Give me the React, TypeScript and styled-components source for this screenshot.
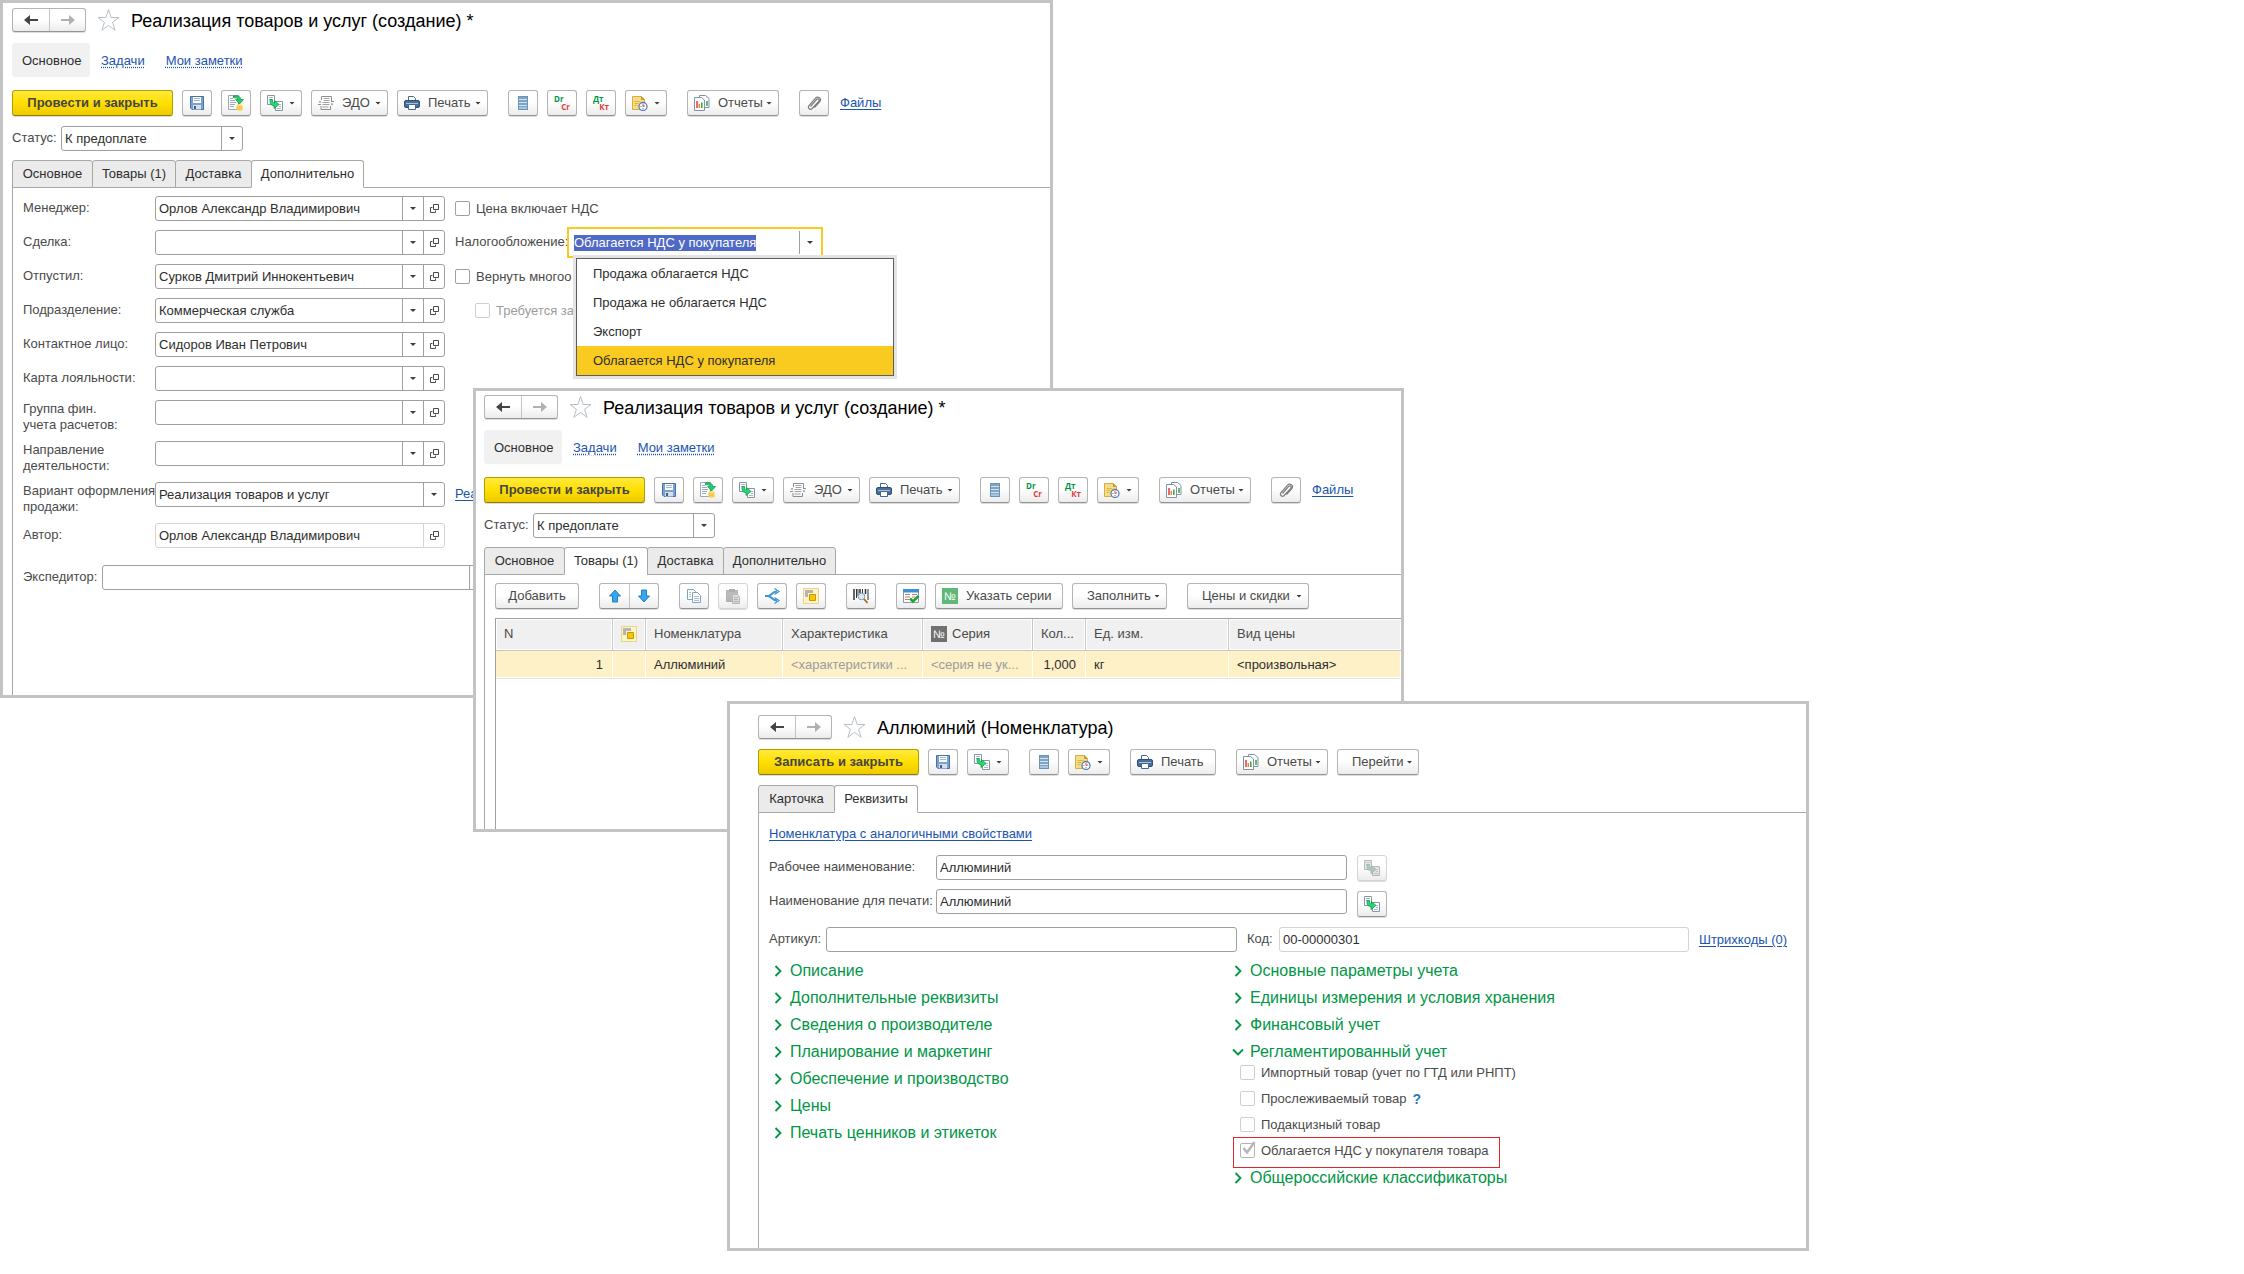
import React, { useEffect, useId, useRef } from "react";
import styled, { createGlobalStyle, css } from "styled-components";

const color = {
  frame: "#c3c3c3",
  line: "#a8a8a8",
  field: "#a0a0a0",
  muted: "#d4d4d4",
  text: "#2e2e2e",
  label: "#4a4a4a",
  faint: "#9c9c9c",
  link: "#1a54ad",
  green: "#009646",
  amber: "#f9cb20",
};

const GlobalStyle = createGlobalStyle`
  *, *::before, *::after { box-sizing: border-box; }
  body { margin: 0; background: #fff; }
  body, button, input, select, table {
    font-family: "Liberation Sans", Arial, sans-serif;
    font-size: 13px;
    line-height: 16px;
    color: ${color.text};
  }
`;

/* ---------- windows ---------- */

const Desktop = styled.main`
  position: relative;
  min-height: 100vh;
  overflow: hidden;
`;

const Window = styled.section<{ $x: number; $y: number; $w: number; $h: number; $pad: string }>`
  position: absolute;
  left: ${(p) => p.$x}px;
  top: ${(p) => p.$y}px;
  width: ${(p) => p.$w}px;
  height: ${(p) => p.$h}px;
  padding: ${(p) => p.$pad};
  display: flex;
  flex-direction: column;
  overflow: hidden;
  white-space: nowrap;
  background: #fff;
  border: 3px solid ${color.frame};
`;

const TitleBar = styled.header`
  display: flex;
  align-items: center;
  height: 24px;
`;

const Title = styled.h1`
  margin: 0 0 0 11px;
  padding-top: 2px;
  font-size: 18px;
  line-height: 24px;
  font-weight: 400;
  color: #000;
`;

const StarButton = styled.button`
  margin-left: 11px;
  padding: 0;
  width: 23px;
  height: 24px;
  border: 0;
  background: none;
  svg { display: block; }
`;

const Sections = styled.nav`
  display: flex;
  align-items: center;
  height: 34px;
  margin-top: 11px;
`;

const CurrentSection = styled.a`
  padding: 10px 10px 8px;
  width: 78px;
  margin-right: 11px;
  border-radius: 3px;
  background: #f1f1f1;
  color: ${color.text};
  text-decoration: none;
`;

const SectionLink = styled.a`
  margin-right: 21px;
  padding-top: 2px;
  color: ${color.link};
  text-decoration: underline dotted;
  text-underline-offset: 2px;
`;

const Link = styled.a`
  color: ${color.link};
  text-underline-offset: 2px;
`;

/* ---------- buttons ---------- */

const Toolbar = styled.div<{ $top: number }>`
  display: flex;
  align-items: center;
  gap: 20px;
  margin-top: ${(p) => p.$top}px;
  ${Link} { margin-left: 2px; }
`;

const Group = styled.div`
  display: flex;
  align-items: center;
  gap: 9px;
`;

const raised = css`
  background: linear-gradient(#fff 0%, #fff 45%, #ececec 100%);
  border: 1px solid #b4b4b4;
  border-bottom-color: #949494;
  border-radius: 3px;
  box-shadow: 0 1px 0 #dcdcdc;
`;

const Button = styled.button<{ $w?: number }>`
  ${raised}
  display: flex;
  align-items: center;
  flex: none;
  width: ${(p) => p.$w ?? 30}px;
  height: 26px;
  padding: 0 6px;
  color: ${color.label};
  white-space: nowrap;
  &:disabled { border-color: #d4d4d4; }
  &:disabled svg { filter: grayscale(0.6) brightness(0.8) opacity(0.5); }
  svg { flex: none; }
`;

const ButtonText = styled.span`
  margin: 0 3px 0 8px;
`;

const PrimaryButton = styled.button`
  flex: none;
  width: 161px;
  height: 26px;
  padding: 0;
  border: 1px solid #b39b00;
  border-bottom-color: #8f7c00;
  border-radius: 3px;
  box-shadow: 0 1px 0 #dcdcdc;
  background: linear-gradient(#ffea3d, #ffdf00 50%, #edca00);
  font-weight: 700;
  color: #454545;
`;

const CenteredButton = styled(Button)`
  justify-content: center;
  padding: 0;
`;

const SplitButtons = styled.div<{ $cell: number; $h: number }>`
  ${raised}
  display: flex;
  height: ${(p) => p.$h}px;
  button {
    display: grid;
    place-items: center;
    width: ${(p) => p.$cell}px;
    padding: 0;
    border: 0;
    background: none;
  }
  button + button { border-left: 1px solid #c4c4c4; }
`;

const Caret = styled.span`
  flex: none;
  width: 6px;
  height: 3px;
  margin-left: auto;
  background: #3c3c3c;
  clip-path: polygon(0 0, 100% 0, 50% 100%);
`;

/* ---------- fields ---------- */

const StatusRow = styled.div`
  display: flex;
  margin-top: 10px;
`;

const Label = styled.label<{ $w?: number; $tall?: boolean }>`
  flex: none;
  width: ${(p) => (p.$w ? `${p.$w}px` : "auto")};
  height: ${(p) => (p.$tall ? 32 : 25)}px;
  padding-top: ${(p) => (p.$tall ? 1 : 4)}px;
  color: ${color.label};
`;

const Box = styled.div<{ $w: number; $muted?: boolean }>`
  --edge: ${(p) => (p.$muted ? color.muted : color.field)};
  position: relative;
  display: flex;
  flex: none;
  width: ${(p) => p.$w}px;
  height: 25px;
  border: 1px solid var(--edge);
  border-radius: 3px;
  background: #fff;
`;

const Input = styled.input`
  flex: 1;
  min-width: 0;
  padding: 0 3px;
  border: 0;
  outline: 0;
  background: none;
`;

const Select = styled.select`
  flex: 1;
  min-width: 0;
  padding: 0 3px;
  border: 0;
  appearance: none;
  background: none;
`;

const SelectMark = styled.span`
  display: grid;
  place-items: center;
  width: 21px;
  border-left: 1px solid var(--edge);
  pointer-events: none;
  ${Caret} { margin: 0; }
`;

const FieldButton = styled.button`
  display: grid;
  place-items: center;
  width: 21px;
  padding: 0;
  border: 0;
  border-left: 1px solid var(--edge);
  background: none;
  ${Caret} { margin: 0; }
`;

const TaxBox = styled(Box)`
  border: 0;
  border-radius: 0;
  outline: 2px solid ${color.amber};
  outline-offset: 1px;
  padding: 1px 0;
  ${Input} { color: ${color.text}; padding: 0 4px; }
  ${Input}::selection { background: #4f69c6; color: #fff; }
`;

const Options = styled.ul`
  position: absolute;
  z-index: 1;
  left: 6px;
  top: 28px;
  width: 318px;
  margin: 0;
  padding: 0;
  list-style: none;
  background: #fff;
  border: 1px solid #5e5e5e;
  box-shadow: 0 0 0 3px #e4e4e4;
`;

const Option = styled.li<{ $active?: boolean }>`
  padding: 7px 16px 6px;
  background: ${(p) => (p.$active ? color.amber : "#fff")};
`;

/* ---------- check boxes ---------- */

const CheckRow = styled.div<{ $h: number; $indent?: number; $marked?: boolean }>`
  position: relative;
  display: flex;
  align-items: center;
  gap: 6px;
  width: fit-content;
  height: ${(p) => p.$h}px;
  margin-left: ${(p) => p.$indent ?? 0}px;
  ${(p) =>
    p.$marked &&
    css`
      &::after {
        content: "";
        position: absolute;
        inset: -6px -12px -10px -7px;
        border: 1px solid #e3242b;
        pointer-events: none;
      }
    `}
`;

const Check = styled.input<{ $muted?: boolean }>`
  flex: none;
  appearance: none;
  width: 15px;
  height: 15px;
  margin: 0;
  border: 1px solid ${(p) => (p.$muted ? "#cfcfcf" : color.field)};
  border-radius: 2px;
  background: #fff;
  &:checked { border-color: #b4b4b4; }
`;

const Tick = styled.svg`
  position: absolute;
  left: 2px;
  top: -2px;
`;

const CheckText = styled.label<{ $faint?: boolean }>`
  color: ${(p) => (p.$faint ? color.faint : color.label)};
`;

const HelpButton = styled.button`
  padding: 0;
  border: 0;
  background: none;
  font-size: 14px;
  font-weight: 700;
  color: #1c7cc4;
`;

/* ---------- tabs ---------- */

const Tabs = styled.div<{ $top: number }>`
  position: relative;
  display: flex;
  height: 28px;
  margin: ${(p) => p.$top}px 0 -1px;
`;

const Tab = styled.button<{ $w: number; $active?: boolean }>`
  width: ${(p) => p.$w}px;
  height: 28px;
  margin-right: -1px;
  padding: 0;
  color: ${color.text};
  border: 1px solid ${color.line};
  border-bottom-color: ${(p) => (p.$active ? "#fff" : color.line)};
  border-radius: 3px 3px 0 0;
  background: ${(p) => (p.$active ? "#fff" : "#ebebeb")};
`;

const Panel = styled.div<{ $top: number }>`
  flex: 1;
  display: flex;
  flex-direction: column;
  min-height: 0;
  padding: ${(p) => p.$top}px 0 0 10px;
  border: solid ${color.line};
  border-width: 1px 0 0 1px;
`;

/* ---------- forms ---------- */

const FormGrid = styled.div`
  display: grid;
  grid-template-columns: 132px 290px 1fr;
  row-gap: 9px;
  align-items: start;
`;

const Aside = styled.div`
  display: flex;
  padding-left: 10px;
  ${Link} { padding-top: 4px; }
`;

const FormLine = styled.div<{ $top: number; $gap?: number }>`
  display: flex;
  gap: ${(p) => p.$gap ?? 0}px;
  margin-top: ${(p) => p.$top}px;
  ${Link} { padding-top: 5px; }
`;

const Stack = styled.div<{ $gap: number }>`
  display: flex;
  flex-direction: column;
  gap: ${(p) => p.$gap}px;
`;

const Pair = styled.div`
  display: flex;
`;

const Columns = styled.div`
  display: grid;
  grid-template-columns: 460px 1fr;
  align-items: start;
  margin-top: 5px;
`;

const Fold = styled.button`
  display: flex;
  align-items: center;
  width: fit-content;
  height: 27px;
  padding: 0;
  border: 0;
  background: none;
  font-size: 16px;
  line-height: 20px;
  color: ${color.green};
  svg { width: 21px; }
`;

const CheckList = styled.div`
  display: flex;
  flex-direction: column;
  gap: 11px;
  padding: 0 0 6px 11px;
`;

/* ---------- table ---------- */

const Table = styled.table`
  flex: 1;
  display: block;
  margin-top: 9px;
  border: solid ${color.field};
  border-width: 1px 0 0 1px;
  border-spacing: 0;
  overflow: hidden;
  thead, tbody { display: block; }
`;

const Row = styled.tr`
  display: grid;
  grid-template-columns: 117px 33px 137px 140px 110px 53px 143px 1fr;
`;

const Th = styled.th`
  display: flex;
  align-items: center;
  gap: 5px;
  height: 32px;
  padding: 0 0 2px 8px;
  background: #f0f0f0;
  border-right: 1px solid #c8c8c8;
  border-bottom: 1px solid #c8c8c8;
  box-shadow: inset 0 0 0 1px #fff;
  font-weight: 400;
  color: ${color.label};
  &:last-child { border-right: 0; }
`;

const Td = styled.td<{ $end?: boolean; $faint?: boolean }>`
  height: 28px;
  padding: 6px 9px 0 8px;
  background: #fef1c7;
  border-right: 1px solid #fff;
  border-bottom: 1px solid #e2e2e2;
  box-shadow: inset 0 -1px 0 #fff;
  text-align: ${(p) => (p.$end ? "right" : "left")};
  color: ${(p) => (p.$faint ? color.faint : color.text)};
`;

/* ---------- icons ---------- */

const Badge = styled.span<{ $bg: string }>`
  flex: none;
  width: 16px;
  height: 16px;
  background: ${(p) => p.$bg};
  color: #fff;
  font-size: 11px;
  line-height: 16px;
  text-align: center;
`;

const Ledger = styled.span`
  display: flex;
  flex-direction: column;
  width: 16px;
  font: 700 8px/8px "Open Sans", sans-serif;
  color: ${color.green};
  span { text-align: left; }
  span + span { text-align: right; color: #e03c3c; }
`;

const Svg = ({ children, w = 16, h = 16 }: { children: React.ReactNode; w?: number; h?: number }) => (
  <svg width={w} height={h} viewBox={`0 0 ${w} ${h}`} fill="none" aria-hidden="true">
    {children}
  </svg>
);

const Arrow = ({ back }: { back?: boolean }) => (
  <Svg w={14} h={12}>
    <path
      d={back ? "M14 5v2H6v4L0 6l6-5v4z" : "M0 5v2h8v4l6-5-6-5v4z"}
      fill={back ? "#454545" : "#b0b0b0"}
    />
  </Svg>
);

const Star = () => (
  <Svg w={23} h={24}>
    <path
      d="M11.500 1.500l2.600 8h7.900l-6.400 4.800 2.500 8-6.600-4.900-6.600 4.900 2.500-8L1 9.500h7.900z"
      stroke="#b9bfc6"
    />
  </Svg>
);

const SaveIcon = () => (
  <Svg>
    <path d="M1.500 1.500h13v13H3l-1.500-1.500z" fill="#7ba3d0" stroke="#4671a3" />
    <path d="M4 2h8v6H4z" fill="#fff" />
    <path d="M5 3.500h6M5 5.500h6" stroke="#9fb6d0" />
    <path d="M4 10h8v4.500H4z" fill="#d5e0ec" />
    <path d="M5 11h2v3H5z" fill="#3a5f8c" />
  </Svg>
);

const PostIcon = () => (
  <Svg>
    <path d="M.5.5h10v14H.5z" fill="#fff" stroke="#9aa9b5" />
    <path d="M2 3.500h3M2 5.500h5M2 7.500h6M2 9.500h5M2 11.500h4" stroke="#9aa9b5" />
    <path d="M5.500 1c4.500-1 7 .5 7.300 3.500h2.700L11.500 9 7.500 4.500h2.300C9.500 3 8 2.300 5.500 3z" fill="#1fce6b" stroke="#0d8a44" strokeWidth=".7" />
    <path d="M8.500 10.500h6v4c0 1.300-6 1.300-6 0z" fill="#f0bf2c" />
    <ellipse cx="11.500" cy="10.500" rx="3" ry="1.200" fill="#fbdc68" />
    <path d="M8.500 12c0 1.300 6 1.300 6 0M8.500 13.500c0 1.300 6 1.300 6 0" stroke="#fbe28a" strokeWidth=".7" />
  </Svg>
);

const CreateFromIcon = () => (
  <Svg>
    <path d="M.5.5h7v9h-7z" fill="#fff" stroke="#8397a8" />
    <path d="M2 2.500h4M2 4.500h2" stroke="#a9b7c3" />
    <path d="M8.500 6.500h7v9h-7z" fill="#fff" stroke="#8397a8" />
    <path d="M12 9.500h2M12 11.500h2M10 13.500h4" stroke="#a9b7c3" />
    <path d="M3 4.500c0 4 .5 6 4 6v3l5-4-4.500-4V8C5.500 8 5.500 6.500 5.500 4.500z" fill="#24d971" stroke="#0f9a4c" strokeWidth=".8" />
  </Svg>
);

const ExchangeIcon = () => (
  <Svg>
    <path d="M3.500 5V1.500h10V6M3 11v3.500h9.500V11" stroke="#8e8e8e" />
    <path d="M5.500 3.500h6M5.500 5.500h6M4.500 7.500h7M4.500 9.500h7M4.500 12h6" stroke="#a3a3a3" />
    <path d="M0 9.500h3M16 6.500h-3" stroke="#8e8e8e" strokeWidth="1.200" />
    <path d="M.5 7.500h3l-1.500-2zM15.500 8.500h-3l1.500 2z" fill="#8e8e8e" />
  </Svg>
);

const PrintIcon = () => (
  <Svg>
    <path d="M4.500 6V1.500h5l2 2V6" fill="#fff" stroke="#45678c" />
    <rect x=".5" y="5.500" width="15" height="7" rx="1.500" fill="#4a6f99" stroke="#2f5078" />
    <path d="M2 8.500h12" stroke="#a9c0da" />
    <path d="M4.500 9.500h7v5h-7z" fill="#fff" stroke="#45678c" />
  </Svg>
);

const ListIcon = () => (
  <Svg>
    <rect x="3.500" y="1.500" width="9" height="13" fill="#7fa5c6" stroke="#6b93b6" />
    <path d="M4 4.500h8M4 7.500h8M4 10.500h8M4 13h8" stroke="#d3e3f0" />
  </Svg>
);

const NoteClockIcon = () => (
  <Svg>
    <path d="M.5 1.500h9l3 3v10H.5z" fill="#f7dc86" stroke="#d5ae48" />
    <path d="M9.500 1.500v3h3" fill="#c99a2a" stroke="#c99a2a" />
    <path d="M2.500 6.500h6M2.500 8.500h4M2.500 10.500h3" stroke="#d8b551" />
    <circle cx="11" cy="11.500" r="4" fill="#fff" stroke="#5382b5" strokeWidth="1.300" />
    <path d="M11 8.800v2.700l2-.7" stroke="#d84040" />
    <path d="M8.500 11.500h1M11 13v1.200" stroke="#5382b5" />
  </Svg>
);

const ReportsIcon = () => (
  <Svg>
    <path d="M5.500.5h6l3.500 3v9H5.500z" fill="#fff" stroke="#7f93a6" />
    <path d="M13 6v5" stroke="#3a9a4a" strokeWidth="1.500" />
    <path d="M.5 2.500h7l3 2.500v10.500H.5z" fill="#fff" stroke="#7f93a6" />
    <path d="M3 6v7" stroke="#e23a3a" strokeWidth="1.500" />
    <path d="M5.300 9v4" stroke="#e58a2a" strokeWidth="1.500" />
    <path d="M7.800 7.500V13" stroke="#35a04a" strokeWidth="1.500" />
  </Svg>
);

const ClipIcon = () => (
  <Svg>
    <path
      d="M4.500 11.500l6-7c1.500-1.500 3.500 0 2.200 1.800l-6.500 7.200c-2 2-5-.3-3.200-2.800l6.500-7.500c2.500-2.500 6.500.3 4.300 3.500L8.500 12.500"
      stroke="#7d7d7d"
      strokeWidth="1.200"
    />
  </Svg>
);

const MoveIcon = ({ down }: { down?: boolean }) => (
  <Svg w={12} h={14}>
    <path
      d={down ? "M6 13l5.500-6H8.500V1h-5v6h-3z" : "M6 1l5.500 6H8.500v6h-5V7h-3z"}
      fill="#3aa5ec"
      stroke="#2380c4"
    />
  </Svg>
);

const CopyIcon = () => (
  <Svg>
    <path d="M1.500 1.500h6l2 2v8h-8z" fill="#fff" stroke="#7fa5bd" />
    <path d="M6.500 4.500h5l3 3v7h-8z" fill="#fff" stroke="#7fa5bd" />
    <path d="M8 8.500h5M8 10.500h5M8 12.500h5M3 4.500h2M3 6.500h2M3 8.500h2" stroke="#a5c1d2" />
  </Svg>
);

const PasteIcon = () => (
  <Svg>
    <path d="M1.500 2.500h11v11h-11z" fill="#a58d7e" stroke="#8c8078" />
    <path d="M4 1h6v3H4z" fill="#777" />
    <path d="M7.500 6.500h5l2 2v7h-7z" fill="#e6eaee" stroke="#8a94a0" />
    <path d="M9 9.500h4M9 11.500h4M9 13.500h4" stroke="#8a94a0" />
  </Svg>
);

const ShareIcon = () => (
  <Svg>
    <path d="M1 8h3c3 0 4-4.500 9-4.500M4 8c3 0 4 4.500 9 4.500" stroke="#3b93cf" strokeWidth="2" />
    <path d="M10.500.5l4.500 3-4.500 3M10.500 9.500l4.500 3-4.500 3" stroke="#3b93cf" strokeWidth="1.200" />
  </Svg>
);

const NestedIcon = () => (
  <Svg>
    <path d="M.5.5h15v15H.5z" fill="#fdf3c9" stroke="#e6d48a" />
    <path d="M2 2h8v3H5v4H2z" fill="#b4b4b4" />
    <path d="M6.500 6.500h6v6h-6z" fill="#f6c30d" stroke="#c99a00" />
  </Svg>
);

const BarcodeIcon = () => (
  <Svg>
    <path d="M1 1v11M7 1v4M12.500 1v5" stroke="#333" strokeWidth="1.500" />
    <path d="M3.500 1v9M5 1v7M9.500 1v4M15 1v11" stroke="#333" />
    <circle cx="8.500" cy="8.500" r="3.300" fill="#dbe9f6" stroke="#7f9cba" />
    <path d="M11 11l3.500 4" stroke="#b5651d" strokeWidth="1.800" />
  </Svg>
);

const FormCheckIcon = () => (
  <Svg>
    <path d="M.5 1.500h15v13H.5z" fill="#fff" stroke="#8d9aa6" />
    <path d="M0 1h16v3.500H0z" fill="#3e8fd4" />
    <path d="M2 6.500h5M9 6.500h5M2 9h5M9 9h3M2 11.500h4" stroke="#c07a7a" />
    <path d="M7 10.500l3 3L15.500 8" stroke="#1fa52f" strokeWidth="2.600" />
  </Svg>
);

const OpenIcon = () => (
  <Svg w={9} h={9}>
    <path d="M3.500.5h5v5h-5zM2.500 3.500h-2v5h5v-2" stroke="#4a4a4a" />
  </Svg>
);

const Chevron = ({ open }: { open?: boolean }) => (
  <svg width="21" height="12" viewBox="0 0 21 12" fill="none" aria-hidden="true">
    <path d={open ? "M4 3.500l5 5 5-5" : "M6.500 1l5 5-5 5"} stroke={color.green} strokeWidth="1.800" />
  </svg>
);

/* ---------- composed parts ---------- */

const Heading = ({ text }: { text: string }) => (
  <TitleBar>
    <SplitButtons $cell={36} $h={24}>
      <button aria-label="Назад"><Arrow back /></button>
      <button aria-label="Вперед"><Arrow /></button>
    </SplitButtons>
    <StarButton aria-label="Избранное"><Star /></StarButton>
    <Title>{text}</Title>
  </TitleBar>
);

const SalesHeader = () => {
  const id = useId();
  return (
    <>
      <Heading text="Реализация товаров и услуг (создание) *" />
      <Sections>
        <CurrentSection href="#main">Основное</CurrentSection>
        <SectionLink href="#tasks">Задачи</SectionLink>
        <SectionLink href="#notes">Мои заметки</SectionLink>
      </Sections>
      <Toolbar $top={13}>
        <Group>
          <PrimaryButton>Провести и закрыть</PrimaryButton>
          <Button aria-label="Записать"><SaveIcon /></Button>
          <Button aria-label="Провести"><PostIcon /></Button>
          <Button $w={42} aria-label="Создать на основании"><CreateFromIcon /><Caret /></Button>
          <Button $w={77}><ExchangeIcon /><ButtonText>ЭДО</ButtonText><Caret /></Button>
          <Button $w={91}><PrintIcon /><ButtonText>Печать</ButtonText><Caret /></Button>
        </Group>
        <Group>
          <Button aria-label="Список"><ListIcon /></Button>
          <Button><Ledger><span>Dr</span><span>Cr</span></Ledger></Button>
          <Button><Ledger><span>Дт</span><span>Кт</span></Ledger></Button>
          <Button $w={42} aria-label="Напоминание"><NoteClockIcon /><Caret /></Button>
        </Group>
        <Button $w={92}><ReportsIcon /><ButtonText>Отчеты</ButtonText><Caret /></Button>
        <Group>
          <Button aria-label="Прикрепить"><ClipIcon /></Button>
          <Link href="#files">Файлы</Link>
        </Group>
      </Toolbar>
      <StatusRow>
        <Label htmlFor={id} $w={49}>Статус:</Label>
        <Box $w={182}>
          <Select id={id}><option>К предоплате</option></Select>
          <SelectMark><Caret /></SelectMark>
        </Box>
      </StatusRow>
    </>
  );
};

const SalesTabs = ({ active }: { active: string }) => (
  <Tabs $top={9} role="tablist">
    {([["Основное", 81], ["Товары (1)", 84], ["Доставка", 77], ["Дополнительно", 113]] as [string, number][]).map(
      ([name, w]) => (
        <Tab key={name} role="tab" $w={w} $active={name === active} aria-selected={name === active}>
          {name}
        </Tab>
      ),
    )}
  </Tabs>
);

type FieldProps = {
  label: React.ReactNode;
  value?: string;
  tall?: boolean;
  muted?: boolean;
  drop?: boolean;
  aside?: React.ReactNode;
};

const Field = ({ label, value = "", tall, muted, drop = true, aside }: FieldProps) => {
  const id = useId();
  return (
    <>
      <Label htmlFor={id} $tall={tall}>{label}</Label>
      <Box $w={290} $muted={muted}>
        <Input id={id} defaultValue={value} readOnly={muted} />
        {drop && <FieldButton aria-label="Выбрать"><Caret /></FieldButton>}
        <FieldButton aria-label="Открыть"><OpenIcon /></FieldButton>
      </Box>
      <Aside>{aside}</Aside>
    </>
  );
};

type CheckFieldProps = {
  text: string;
  h: number;
  indent?: number;
  disabled?: boolean;
  faint?: boolean;
  checked?: boolean;
  marked?: boolean;
  help?: boolean;
};

const CheckField = ({ text, h, indent, disabled, faint, checked, marked, help }: CheckFieldProps) => {
  const id = useId();
  return (
    <CheckRow $h={h} $indent={indent} $marked={marked}>
      <Check id={id} type="checkbox" disabled={disabled} defaultChecked={checked} $muted={disabled} />
      {checked && (
        <Tick width="14" height="14" viewBox="0 0 14 14" fill="none" aria-hidden="true">
          <path d="M1.500 7l3.500 4.500L12.500 1" stroke="#b5b5b5" strokeWidth="2.500" />
        </Tick>
      )}
      <CheckText htmlFor={id} $faint={faint}>{text}</CheckText>
      {help && <HelpButton>?</HelpButton>}
    </CheckRow>
  );
};

const taxModes = [
  "Продажа облагается НДС",
  "Продажа не облагается НДС",
  "Экспорт",
  "Облагается НДС у покупателя",
];

const TaxField = () => {
  const id = useId();
  const input = useRef<HTMLInputElement>(null);
  useEffect(() => {
    input.current?.focus({ preventScroll: true });
    input.current?.select();
  }, []);
  return (
    <>
      <Label htmlFor={id} $w={115}>Налогообложение:</Label>
      <TaxBox $w={250}>
        <Input ref={input} id={id} role="combobox" aria-expanded="true" defaultValue={taxModes[3]} />
        <FieldButton aria-label="Выбрать"><Caret /></FieldButton>
        <Options role="listbox">
          {taxModes.map((mode) => (
            <Option key={mode} role="option" $active={mode === taxModes[3]} aria-selected={mode === taxModes[3]}>
              {mode}
            </Option>
          ))}
        </Options>
      </TaxBox>
    </>
  );
};

const AdditionalWindow = () => {
  const variant = useId();
  const carrier = useId();
  return (
    <Window $x={0} $y={0} $w={1053} $h={698} $pad="5px 0 0 9px">
      <SalesHeader />
      <SalesTabs active="Дополнительно" />
      <Panel $top={8}>
        <FormGrid>
          <Field
            label="Менеджер:"
            value="Орлов Александр Владимирович"
            aside={<CheckField h={25} text="Цена включает НДС" />}
          />
          <Field label="Сделка:" aside={<TaxField />} />
          <Field
            label="Отпустил:"
            value="Сурков Дмитрий Иннокентьевич"
            aside={<CheckField h={25} text="Вернуть многоо" />}
          />
          <Field
            label="Подразделение:"
            value="Коммерческая служба"
            aside={<CheckField h={25} indent={20} disabled faint text="Требуется за" />}
          />
          <Field label="Контактное лицо:" value="Сидоров Иван Петрович" />
          <Field label="Карта лояльности:" />
          <Field tall label={<>Группа фин.<br />учета расчетов:</>} />
          <Field tall label={<>Направление<br />деятельности:</>} />
          <Label htmlFor={variant} $tall>Вариант оформления<br />продажи:</Label>
          <Box $w={290}>
            <Select id={variant}><option>Реализация товаров и услуг</option></Select>
            <SelectMark><Caret /></SelectMark>
          </Box>
          <Aside><Link href="#sale">Реал</Link></Aside>
          <Field label="Автор:" value="Орлов Александр Владимирович" muted drop={false} />
        </FormGrid>
        <FormLine $top={17}>
          <Label htmlFor={carrier} $w={79}>Экспедитор:</Label>
          <Box $w={410}>
            <Input id={carrier} />
            <FieldButton aria-label="Выбрать"><Caret /></FieldButton>
            <FieldButton aria-label="Открыть"><OpenIcon /></FieldButton>
          </Box>
        </FormLine>
      </Panel>
    </Window>
  );
};

const GoodsWindow = () => (
  <Window $x={473} $y={388} $w={931} $h={444} $pad="4px 0 0 8px">
    <SalesHeader />
    <SalesTabs active="Товары (1)" />
    <Panel $top={8}>
      <Toolbar $top={0}>
        <CenteredButton $w={84}>Добавить</CenteredButton>
        <SplitButtons $cell={29} $h={26}>
          <button aria-label="Вверх"><MoveIcon /></button>
          <button aria-label="Вниз"><MoveIcon down /></button>
        </SplitButtons>
        <Group>
          <Button aria-label="Копировать"><CopyIcon /></Button>
          <Button aria-label="Вставить" disabled><PasteIcon /></Button>
          <Button aria-label="Разбить строку"><ShareIcon /></Button>
          <Button aria-label="Упаковка"><NestedIcon /></Button>
        </Group>
        <Button aria-label="Поиск по штрихкоду"><BarcodeIcon /></Button>
        <Group>
          <Button aria-label="Проверить"><FormCheckIcon /></Button>
          <Button $w={128}><Badge $bg="#5fb878">№</Badge><ButtonText>Указать серии</ButtonText></Button>
          <Button $w={95}><ButtonText>Заполнить</ButtonText><Caret /></Button>
        </Group>
        <Button $w={122}><ButtonText>Цены и скидки</ButtonText><Caret /></Button>
      </Toolbar>
      <Table>
        <thead>
          <Row>
            <Th>N</Th>
            <Th><NestedIcon /></Th>
            <Th>Номенклатура</Th>
            <Th>Характеристика</Th>
            <Th><Badge $bg="#707070">№</Badge>Серия</Th>
            <Th>Кол...</Th>
            <Th>Ед. изм.</Th>
            <Th>Вид цены</Th>
          </Row>
        </thead>
        <tbody>
          <Row>
            <Td $end>1</Td>
            <Td />
            <Td>Аллюминий</Td>
            <Td $faint>&lt;характеристики ...</Td>
            <Td $faint>&lt;серия не ук...</Td>
            <Td $end>1,000</Td>
            <Td>кг</Td>
            <Td>&lt;произвольная&gt;</Td>
          </Row>
        </tbody>
      </Table>
    </Panel>
  </Window>
);

const leftFolds = [
  "Описание",
  "Дополнительные реквизиты",
  "Сведения о производителе",
  "Планирование и маркетинг",
  "Обеспечение и производство",
  "Цены",
  "Печать ценников и этикеток",
];

const rightFolds = [
  "Основные параметры учета",
  "Единицы измерения и условия хранения",
  "Финансовый учет",
];

const ItemWindow = () => {
  const id = useId();
  return (
    <Window $x={727} $y={701} $w={1082} $h={550} $pad="11px 0 0 28px">
      <Heading text="Аллюминий (Номенклатура)" />
      <Toolbar $top={10}>
        <Group>
          <PrimaryButton>Записать и закрыть</PrimaryButton>
          <Button aria-label="Записать"><SaveIcon /></Button>
          <Button $w={42} aria-label="Создать на основании"><CreateFromIcon /><Caret /></Button>
        </Group>
        <Group>
          <Button aria-label="Список"><ListIcon /></Button>
          <Button $w={42} aria-label="Напоминание"><NoteClockIcon /><Caret /></Button>
        </Group>
        <Button $w={86}><PrintIcon /><ButtonText>Печать</ButtonText></Button>
        <Group>
          <Button $w={92}><ReportsIcon /><ButtonText>Отчеты</ButtonText><Caret /></Button>
          <Button $w={82}><ButtonText>Перейти</ButtonText><Caret /></Button>
        </Group>
      </Toolbar>
      <Tabs $top={10} role="tablist">
        <Tab role="tab" $w={77}>Карточка</Tab>
        <Tab role="tab" $w={84} $active aria-selected="true">Реквизиты</Tab>
      </Tabs>
      <Panel $top={8}>
        <FormLine $top={0}><Link href="#similar">Номенклатура с аналогичными свойствами</Link></FormLine>
        <FormLine $top={13} $gap={10}>
          <Stack $gap={9}>
            <Pair>
              <Label htmlFor={`${id}a`} $w={167}>Рабочее наименование:</Label>
              <Box $w={411}><Input id={`${id}a`} defaultValue="Аллюминий" /></Box>
            </Pair>
            <Pair>
              <Label htmlFor={`${id}b`} $w={167}>Наименование для печати:</Label>
              <Box $w={411}><Input id={`${id}b`} defaultValue="Аллюминий" /></Box>
            </Pair>
          </Stack>
          <Stack $gap={10}>
            <Button disabled aria-label="Заполнить наименование"><CreateFromIcon /></Button>
            <Button aria-label="Заполнить для печати"><CreateFromIcon /></Button>
          </Stack>
        </FormLine>
        <FormLine $top={10} $gap={10}>
          <Pair>
            <Label htmlFor={`${id}c`} $w={57}>Артикул:</Label>
            <Box $w={411}><Input id={`${id}c`} /></Box>
          </Pair>
          <Pair>
            <Label htmlFor={`${id}d`} $w={32}>Код:</Label>
            <Box $w={410} $muted><Input id={`${id}d`} defaultValue="00-00000301" readOnly /></Box>
          </Pair>
          <Link href="#barcodes">Штрихкоды (0)</Link>
        </FormLine>
        <Columns>
          <Stack $gap={0}>
            {leftFolds.map((name) => (
              <Fold key={name}><Chevron />{name}</Fold>
            ))}
          </Stack>
          <Stack $gap={0}>
            {rightFolds.map((name) => (
              <Fold key={name}><Chevron />{name}</Fold>
            ))}
            <Fold aria-expanded="true"><Chevron open />Регламентированный учет</Fold>
            <CheckList>
              <CheckField h={15} disabled text="Импортный товар (учет по ГТД или РНПТ)" />
              <CheckField h={15} disabled help text="Прослеживаемый товар" />
              <CheckField h={15} disabled text="Подакцизный товар" />
              <CheckField h={15} disabled checked marked text="Облагается НДС у покупателя товара" />
            </CheckList>
            <Fold><Chevron />Общероссийские классификаторы</Fold>
          </Stack>
        </Columns>
      </Panel>
    </Window>
  );
};

export default function App() {
  return (
    <>
      <GlobalStyle />
      <Desktop>
        <AdditionalWindow />
        <GoodsWindow />
        <ItemWindow />
      </Desktop>
    </>
  );
}
